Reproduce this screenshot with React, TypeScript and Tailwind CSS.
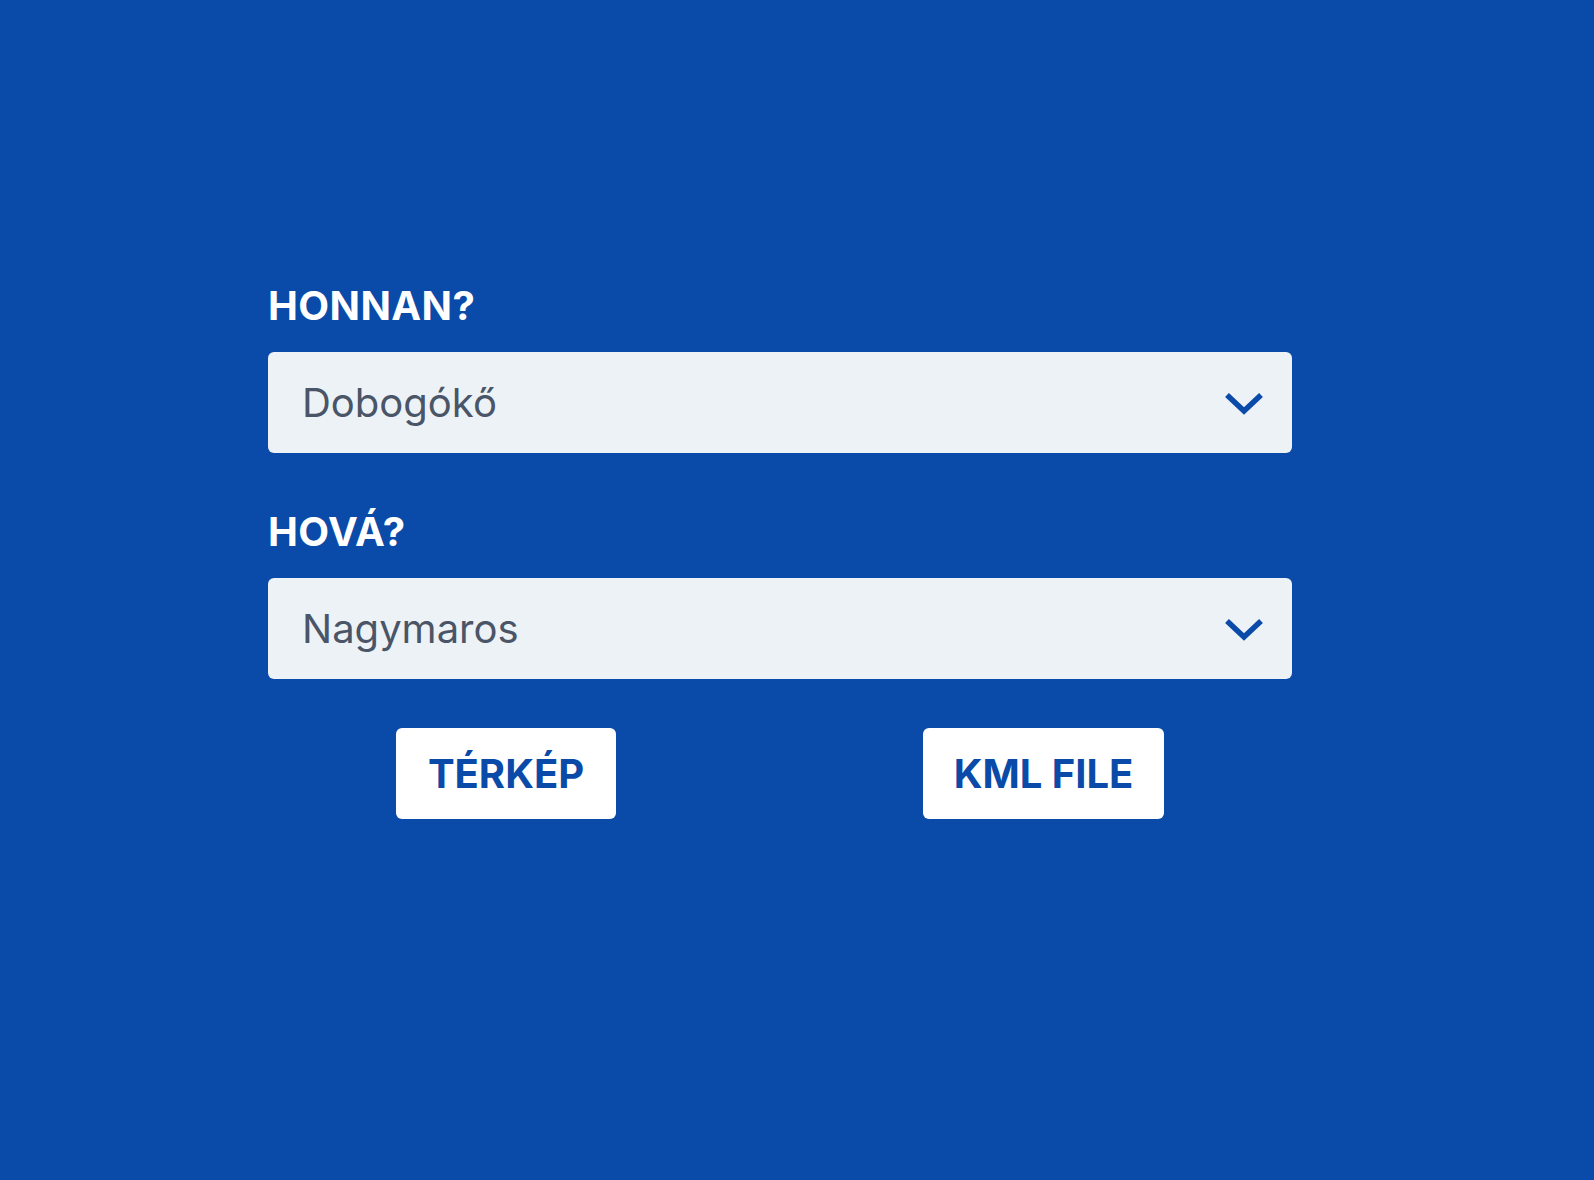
const font = { fontFamily: "Inter, 'Noto Sans', sans-serif" };

const Chevron = () => (
  <svg width="38" height="26" viewBox="0 0 38 26" className="shrink-0">
    <polyline points="2,5 19,21 36,5" fill="none" stroke="#0a4aa8" strokeWidth="5.5" />
  </svg>
);

const Field = ({ label, value }: { label: string; value: string }) => (
  <div className="flex flex-col">
    <label className="text-[40px] leading-[48px] font-bold tracking-[0.4px] text-white mb-[22px]">{label}</label>
    <div className="h-[101px] bg-[#edf2f7] rounded-md flex items-center justify-between pl-[34px] pr-[29px]">
      <span className="text-[40px] leading-[48px] text-[#4a5568]">{value}</span>
      <Chevron />
    </div>
  </div>
);

export default function App() {
  return (
    <div className="min-h-[1180px] w-full bg-[#0a4aa8] pt-[282px] pl-[268px]" style={font}>
      <div className="w-[1024px] flex flex-col gap-[55px]">
        <Field label="HONNAN?" value="Dobogókő" />
        <Field label="HOVÁ?" value="Nagymaros" />
      </div>
      <div className="w-[1024px] flex justify-center gap-[307px] mt-[49px]">
        <button className="w-[220px] h-[91px] bg-white rounded-md text-[40px] font-bold text-[#0a4aa8]">
          TÉRKÉP
        </button>
        <button className="w-[241px] h-[91px] bg-white rounded-md text-[40px] font-bold text-[#0a4aa8]">
          KML FILE
        </button>
      </div>
    </div>
  );
}
